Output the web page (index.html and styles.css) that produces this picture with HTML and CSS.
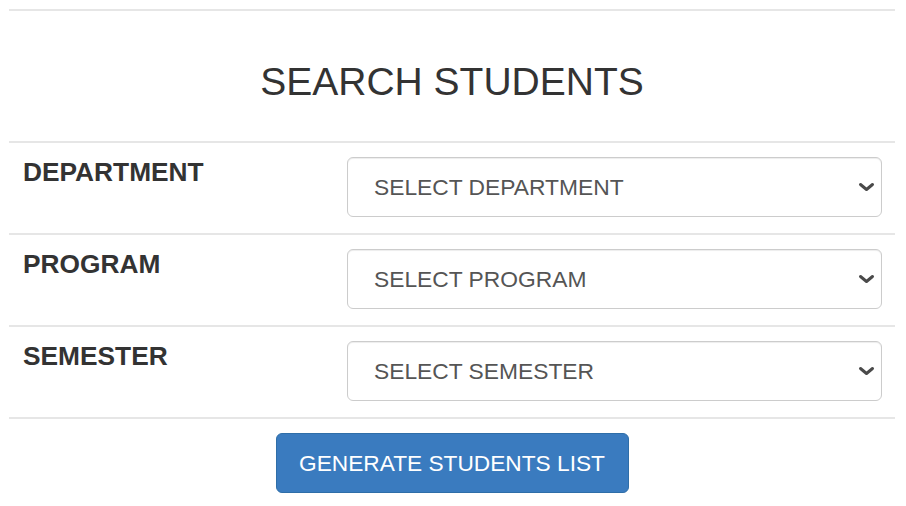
FILE: index.html
```html
<!DOCTYPE html>
<html lang="en">
<head>
<meta charset="utf-8">
<title>Search Students</title>
<link rel="stylesheet" href="styles.css">
</head>
<body>
<div class="page">
  <div class="panel">
    <h3 class="title">SEARCH STUDENTS</h3>
    <div class="row">
      <div class="label">DEPARTMENT</div>
      <div class="field">
        <div class="select-wrap">
          <select class="select"><option>SELECT DEPARTMENT</option></select>
          <svg class="chevron" width="17" height="10" viewBox="0 0 17 10"><polyline points="2.5,2.5 8.5,7.5 14.5,2.5" fill="none" stroke="#4a4a4a" stroke-width="3" stroke-linecap="round" stroke-linejoin="round"/></svg>
        </div>
      </div>
    </div>
    <div class="row">
      <div class="label">PROGRAM</div>
      <div class="field">
        <div class="select-wrap">
          <select class="select"><option>SELECT PROGRAM</option></select>
          <svg class="chevron" width="17" height="10" viewBox="0 0 17 10"><polyline points="2.5,2.5 8.5,7.5 14.5,2.5" fill="none" stroke="#4a4a4a" stroke-width="3" stroke-linecap="round" stroke-linejoin="round"/></svg>
        </div>
      </div>
    </div>
    <div class="row last">
      <div class="label">SEMESTER</div>
      <div class="field">
        <div class="select-wrap">
          <select class="select"><option>SELECT SEMESTER</option></select>
          <svg class="chevron" width="17" height="10" viewBox="0 0 17 10"><polyline points="2.5,2.5 8.5,7.5 14.5,2.5" fill="none" stroke="#4a4a4a" stroke-width="3" stroke-linecap="round" stroke-linejoin="round"/></svg>
        </div>
      </div>
    </div>
    <div class="actions">
      <button class="btn">GENERATE STUDENTS LIST</button>
    </div>
  </div>
</div>
</body>
</html>
```

FILE: styles.css
```css
html, body {
  margin: 0;
  padding: 0;
  background: #ffffff;
}

body {
  font-family: "Liberation Sans", Arial, sans-serif;
  color: #333333;
}

.page {
  padding: 9px 11px 0 9px;
}

.panel {
  border-top: 2px solid #e6e6e6;
}

.title {
  margin: 0;
  padding: 50px 0 0;
  height: 80px;
  text-align: center;
  font-size: 39px;
  font-weight: normal;
  line-height: 1.1;
  color: #333333;
}

.row {
  display: grid;
  grid-template-columns: 322px 1fr;
  border-top: 2px solid #e6e6e6;
}

.row.last {
  border-bottom: 2px solid #e6e6e6;
}

.label {
  padding: 15px 0 15px 14px;
  font-size: 26.3px;
  font-weight: bold;
  line-height: 1.1;
  color: #333333;
}

.field {
  padding: 14px 13px 16px 16px;
}

.select-wrap {
  position: relative;
}

.select {
  display: block;
  width: 100%;
  height: 60px;
  margin: 0;
  padding: 0 40px 0 26px;
  border: 1px solid #cccccc;
  border-radius: 6px;
  background: #ffffff;
  box-shadow: inset 0 1px 1px rgba(0, 0, 0, 0.075);
  -webkit-appearance: none;
  appearance: none;
  font-family: "Liberation Sans", Arial, sans-serif;
  font-size: 22.8px;
  color: #555555;
  box-sizing: border-box;
  outline: none;
}

.chevron {
  position: absolute;
  right: 7px;
  top: 25px;
  pointer-events: none;
}

.actions {
  display: flex;
  justify-content: center;
  padding-top: 14px;
}

.btn {
  width: 353px;
  height: 60px;
  border: 1px solid #2f6ea8;
  border-radius: 6px;
  background: #3a7bbf;
  color: #ffffff;
  font-family: "Liberation Sans", Arial, sans-serif;
  font-size: 22.7px;
  padding: 0;
  cursor: pointer;
}
```
